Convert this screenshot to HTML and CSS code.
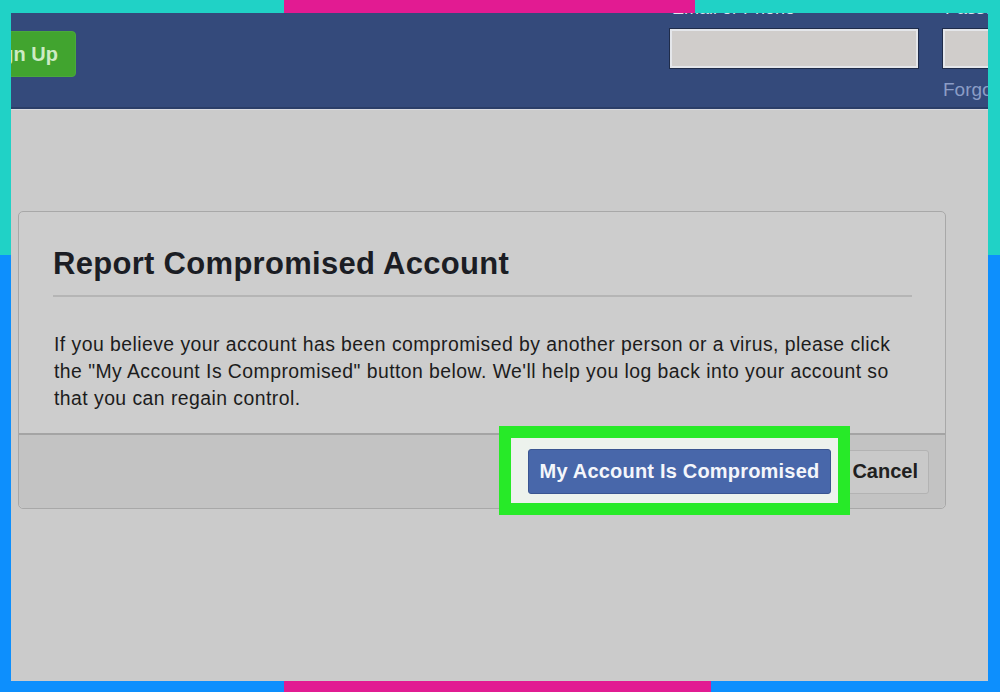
FILE: index.html
```html
<!DOCTYPE html>
<html lang="en">

<head>
    <meta charset="UTF-8">
    <title>Report Compromised Account</title>
    <link rel="stylesheet" href="styles.css">
</head>

<body>
    <div class="frame">
        <div class="screen">

            <header class="topbar">
                <button class="signup">Sign Up</button>
                <div class="login">
                    <div class="field email">
                        <label>Email or Phone</label>
                        <input type="text">
                    </div>
                    <div class="field pass">
                        <label>Password</label>
                        <input type="password">
                        <a href="#" class="forgot">Forgot account?</a>
                    </div>
                </div>
            </header>

            <main class="page">
                <section class="dialog">
                    <div class="dialog_head">
                        <h2>Report Compromised Account</h2>
                    </div>
                    <p class="dialog_body">If you believe your account has been compromised by another person or a virus, please click the "My Account Is Compromised" button below. We'll help you log back into your account so that you can regain control.</p>
                    <div class="dialog_foot">
                        <div class="mark">
                            <button class="primary">My Account Is Compromised</button>
                        </div>
                        <button class="cancel">Cancel</button>
                    </div>
                </section>
            </main>

        </div>
    </div>
</body>

</html>
```

FILE: styles.css
```css
html,
body {
    margin: 0;
    height: 100%;
}

body {
    font-family: "Liberation Sans", Arial, sans-serif;
}

/* coloured frame round the screenshot */
.frame {
    box-sizing: border-box;
    height: 692px;
    padding: 13px 12px 11px 11px;
    background:
        linear-gradient(to right, #20d2c6 284px, #e21b92 284px, #e21b92 695px, #20d2c6 695px) top / 100% 13px no-repeat,
        linear-gradient(to right, #0d8ffd 284px, #e21b92 284px, #e21b92 711px, #0d8ffd 711px) bottom / 100% 11px no-repeat,
        linear-gradient(to bottom, #20d2c6 255px, #0d8ffd 255px);
}

.screen {
    height: 100%;
    display: flex;
    flex-direction: column;
    background-color: #cbcbcb;
    overflow: hidden;
}

/* blue top bar */
.topbar {
    height: 94px;
    flex-shrink: 0;
    display: flex;
    justify-content: space-between;
    background-color: #344a7b;
    border-bottom: 2px solid #2b3e68;
    box-shadow: 0 1px 0 #d9dbe0;
}

.signup {
    flex-shrink: 0;
    align-self: flex-start;
    margin: 18px 0 0 -40px;
    height: 46px;
    width: 105px;
    padding: 0 17px 0 0;
    text-align: right;
    white-space: nowrap;
    border: 1px solid #4aa93a;
    border-radius: 4px;
    background-color: #41a42f;
    color: #cdebc4;
    font-family: "Liberation Sans", Arial, sans-serif;
    font-weight: bold;
    font-size: 20px;
}

.login {
    display: flex;
    gap: 25px;
    margin-right: -55px;
}

.field {
    display: flex;
    flex-direction: column;
    margin-top: -15px;
}

.field label {
    height: 31px;
    color: #dde2ee;
    font-size: 18px;
    padding-left: 2px;
    white-space: nowrap;
}

.field input {
    box-sizing: border-box;
    width: 100%;
    height: 39px;
    margin: 0;
    border: 2px solid #e4e6ea;
    outline: 1px solid #1f2c4a;
    background-color: #d0cdcb;
}

.email {
    width: 248px;
}

.pass {
    width: 100px;
}

.forgot {
    margin-top: 11px;
    color: #8b9dc6;
    font-size: 19px;
    white-space: nowrap;
    text-decoration: none;
}

/* dialog */
.page {
    flex: 1;
    padding: 102px 42px 0 7px;
}

.dialog {
    box-sizing: border-box;
    height: 298px;
    display: flex;
    flex-direction: column;
    border: 1px solid #a8a8a8;
    border-radius: 5px;
    background-color: #cdcdcd;
}

.dialog_head {
    margin: 0 33px 0 34px;
    padding: 34px 0 13px 0;
    border-bottom: 2px solid #b5b5b5;
}

.dialog_head h2 {
    margin: 0;
    font-size: 31px;
    letter-spacing: 0.3px;
    line-height: 36px;
    color: #1b1d24;
}

.dialog_body {
    flex: 1;
    margin: 0;
    padding: 34px 40px 0 35px;
    font-size: 19.4px;
    letter-spacing: 0.45px;
    line-height: 27px;
    color: #1c1c1c;
}

.dialog_foot {
    height: 73px;
    flex-shrink: 0;
    display: flex;
    justify-content: flex-end;
    align-items: center;
    padding-right: 16px;
    border-top: 2px solid #a4a4a4;
    border-radius: 0 0 5px 5px;
    background-color: #c3c3c3;
}

.mark {
    position: relative;
    z-index: 1;
    margin: -8px 0 -6px;
    padding: 11px 7px 9px 17px;
    border: 12px solid #27ea28;
    background-color: #edf2ed;
}

.primary {
    display: block;
    height: 45px;
    width: 303px;
    border: 1px solid #3a5591;
    border-radius: 3px;
    background-color: #4867aa;
    color: #f4f6fb;
    font-family: "Liberation Sans", Arial, sans-serif;
    font-weight: bold;
    font-size: 20px;
    letter-spacing: 0.2px;
}

.cancel {
    height: 44px;
    width: 88px;
    margin-left: -9px;
    padding: 0 10px 0 0;
    text-align: right;
    border: 1px solid #b3b3b3;
    border-radius: 3px;
    background-color: #c9c9c9;
    color: #202020;
    font-family: "Liberation Sans", Arial, sans-serif;
    font-weight: bold;
    font-size: 20px;
}
```
